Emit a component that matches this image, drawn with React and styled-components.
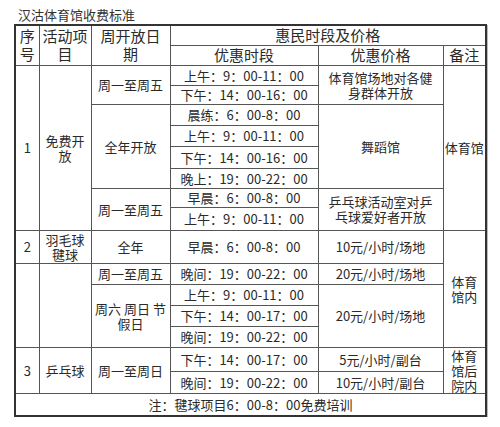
import React from "react";
import styled, { createGlobalStyle } from "styled-components";

const Global = createGlobalStyle`
  html, body { margin: 0; padding: 0; background: #fff; }
  body { font-family: "Noto Sans CJK SC", "Noto Sans", sans-serif; color: #2a2a2a; }
`;

const Page = styled.div`
  padding: 5px 0 0 14px;
  width: 471px;
`;

const Title = styled.div`
  font-size: 13px;
  line-height: 19px;
  height: 19px;
  padding-left: 4px;
  color: #333;
`;

const Table = styled.table`
  border-collapse: collapse;
  table-layout: fixed;
  width: 471px;
  border: 2px solid #333;
  box-shadow: 1px 1px 0 #bbb;
`;

const Row = styled.tr`
  height: ${(p) => p.$h}px;
`;

const Cell = styled.td`
  border: 1px solid #555;
  padding: 0 1px;
  text-align: center;
  vertical-align: middle;
  font-size: ${(p) => (p.$head ? 15 : 13)}px;
  line-height: ${(p) => (p.$head ? 18 : 15)}px;
  white-space: nowrap;
  overflow: hidden;
`;

const widths = [24, 52, 79, 148, 125, 43];

const br = (s) =>
  s.split("|").map((t, i, a) => (
    <React.Fragment key={i}>
      {t}
      {i < a.length - 1 && <br />}
    </React.Fragment>
  ));

export default function App() {
  return (
    <>
      <Global />
      <Page>
        <Title>汉沽体育馆收费标准</Title>
        <Table>
          <colgroup>
            {widths.map((w, i) => (
              <col key={i} style={{ width: w }} />
            ))}
          </colgroup>
          <tbody>
            <Row $h={20}>
              <Cell $head rowSpan={2}>{br("序|号")}</Cell>
              <Cell $head rowSpan={2}>{br("活动项|目")}</Cell>
              <Cell $head rowSpan={2}>{br("周开放日|期")}</Cell>
              <Cell $head colSpan={3}>惠民时段及价格</Cell>
            </Row>
            <Row $h={20}>
              <Cell $head>优惠时段</Cell>
              <Cell $head>优惠价格</Cell>
              <Cell $head>备注</Cell>
            </Row>
            <Row $h={20}>
              <Cell rowSpan={8}>1</Cell>
              <Cell rowSpan={8}>{br("免费开|放")}</Cell>
              <Cell rowSpan={2}>周一至周五</Cell>
              <Cell>上午：9：00-11：00</Cell>
              <Cell rowSpan={2}>{br("体育馆场地对各健|身群体开放")}</Cell>
              <Cell rowSpan={8}>体育馆</Cell>
            </Row>
            <Row $h={19}>
              <Cell>下午：14：00-16：00</Cell>
            </Row>
            <Row $h={21}>
              <Cell rowSpan={4}>全年开放</Cell>
              <Cell>晨练：6：00-8：00</Cell>
              <Cell rowSpan={4}>舞蹈馆</Cell>
            </Row>
            <Row $h={21}>
              <Cell>上午：9：00-11：00</Cell>
            </Row>
            <Row $h={22}>
              <Cell>下午：14：00-16：00</Cell>
            </Row>
            <Row $h={20}>
              <Cell>晚上：19：00-22：00</Cell>
            </Row>
            <Row $h={19}>
              <Cell rowSpan={2}>周一至周五</Cell>
              <Cell>早晨：6：00-8：00</Cell>
              <Cell rowSpan={2}>{br("乒乓球活动室对乒|乓球爱好者开放")}</Cell>
            </Row>
            <Row $h={23}>
              <Cell>上午：9：00-11：00</Cell>
            </Row>
            <Row $h={33}>
              <Cell>2</Cell>
              <Cell>{br("羽毛球|毽球")}</Cell>
              <Cell>全年</Cell>
              <Cell>早晨：6：00-8：00</Cell>
              <Cell>10元/小时/场地</Cell>
              <Cell rowSpan={5}>{br("体育|馆内")}</Cell>
            </Row>
            <Row $h={21}>
              <Cell rowSpan={4}></Cell>
              <Cell rowSpan={4}></Cell>
              <Cell>周一至周五</Cell>
              <Cell>晚间：19：00-22：00</Cell>
              <Cell>20元/小时/场地</Cell>
            </Row>
            <Row $h={21}>
              <Cell rowSpan={3}>{br("周六 周日 节|假日")}</Cell>
              <Cell>上午：9：00-11：00</Cell>
              <Cell rowSpan={3}>20元/小时/场地</Cell>
            </Row>
            <Row $h={21}>
              <Cell>下午：14：00-17：00</Cell>
            </Row>
            <Row $h={21}>
              <Cell>晚间：19：00-22：00</Cell>
            </Row>
            <Row $h={24}>
              <Cell rowSpan={2}>3</Cell>
              <Cell rowSpan={2}>乒乓球</Cell>
              <Cell rowSpan={2}>周一至周日</Cell>
              <Cell>下午：14：00-17：00</Cell>
              <Cell>5元/小时/副台</Cell>
              <Cell rowSpan={2}>{br("体育|馆后|院内")}</Cell>
            </Row>
            <Row $h={21}>
              <Cell>晚间：19：00-22：00</Cell>
              <Cell>10元/小时/副台</Cell>
            </Row>
            <Row $h={23}>
              <Cell colSpan={6}>注：毽球项目6：00-8：00免费培训</Cell>
            </Row>
          </tbody>
        </Table>
      </Page>
    </>
  );
}
